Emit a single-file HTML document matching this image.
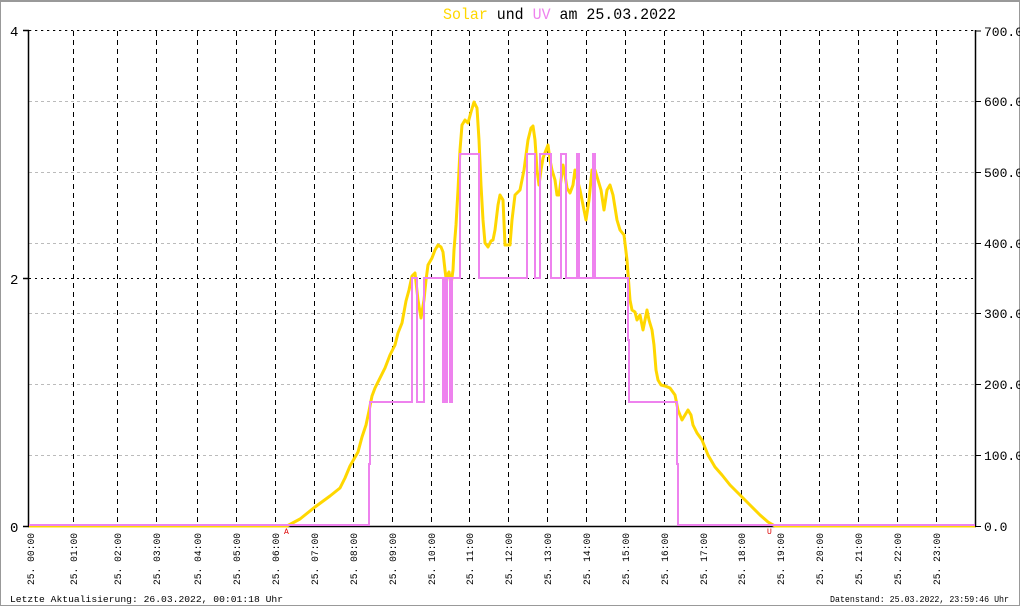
<!DOCTYPE html>
<html><head><meta charset="utf-8"><style>
html,body{margin:0;padding:0;background:#fff}
svg{display:block}
text{font-family:"Liberation Mono","DejaVu Sans Mono",monospace}
</style></head><body>
<svg width="1020" height="606" viewBox="0 0 1020 606" xmlns="http://www.w3.org/2000/svg">
<rect x="0.5" y="0.5" width="1019" height="605" fill="#fff" stroke="#999" stroke-width="1"/>
<line x1="0" y1="1" x2="1020" y2="1" stroke="#999" stroke-width="2"/>
<text x="443" y="19" font-size="16" textLength="233" lengthAdjust="spacingAndGlyphs"><tspan fill="#ffd700">Solar</tspan> und <tspan fill="#ee82ee">UV</tspan> am 25.03.2022</text>
<g stroke="#bbb" stroke-dasharray="3,3" stroke-width="1">
<line x1="29" y1="101.5" x2="975" y2="101.5"/><line x1="29" y1="172.5" x2="975" y2="172.5"/>
<line x1="29" y1="243.5" x2="975" y2="243.5"/><line x1="29" y1="313.5" x2="975" y2="313.5"/>
<line x1="29" y1="384.5" x2="975" y2="384.5"/><line x1="29" y1="455.5" x2="975" y2="455.5"/>
<line x1="29" y1="30.5" x2="975" y2="30.5"/>
</g>
<g stroke="#000" stroke-dasharray="2,4" stroke-width="1">
<line x1="29" y1="30.5" x2="975" y2="30.5"/><line x1="29" y1="278.5" x2="975" y2="278.5"/>
</g>
<g stroke="#000" stroke-dasharray="5,4" stroke-width="1">
<line x1="73.5" y1="31" x2="73.5" y2="526"/><line x1="117.5" y1="31" x2="117.5" y2="526"/>
<line x1="156.5" y1="31" x2="156.5" y2="526"/><line x1="197.5" y1="31" x2="197.5" y2="526"/>
<line x1="236.5" y1="31" x2="236.5" y2="526"/><line x1="275.5" y1="31" x2="275.5" y2="526"/>
<line x1="314.5" y1="31" x2="314.5" y2="526"/><line x1="353.5" y1="31" x2="353.5" y2="526"/>
<line x1="392.5" y1="31" x2="392.5" y2="526"/><line x1="431.5" y1="31" x2="431.5" y2="526"/>
<line x1="469.5" y1="31" x2="469.5" y2="526"/><line x1="508.5" y1="31" x2="508.5" y2="526"/>
<line x1="547.5" y1="31" x2="547.5" y2="526"/><line x1="586.5" y1="31" x2="586.5" y2="526"/>
<line x1="625.5" y1="31" x2="625.5" y2="526"/><line x1="664.5" y1="31" x2="664.5" y2="526"/>
<line x1="703.5" y1="31" x2="703.5" y2="526"/><line x1="741.5" y1="31" x2="741.5" y2="526"/>
<line x1="780.5" y1="31" x2="780.5" y2="526"/><line x1="819.5" y1="31" x2="819.5" y2="526"/>
<line x1="858.5" y1="31" x2="858.5" y2="526"/><line x1="897.5" y1="31" x2="897.5" y2="526"/>
<line x1="936.5" y1="31" x2="936.5" y2="526"/>
</g>
<g stroke="#000" stroke-width="1.5">
<line x1="28.5" y1="30" x2="28.5" y2="527"/>
<line x1="975.5" y1="30" x2="975.5" y2="527"/>
<line x1="28" y1="526.5" x2="976" y2="526.5"/>
<line x1="23" y1="30.5" x2="29" y2="30.5"/><line x1="23" y1="278.5" x2="29" y2="278.5"/><line x1="23" y1="526.5" x2="29" y2="526.5"/>
</g>
<g stroke="#000" stroke-width="1">
<line x1="975" y1="31" x2="981" y2="31"/><line x1="975" y1="101.5" x2="981" y2="101.5"/><line x1="975" y1="172.5" x2="981" y2="172.5"/><line x1="975" y1="243.5" x2="981" y2="243.5"/><line x1="975" y1="313.5" x2="981" y2="313.5"/><line x1="975" y1="384.5" x2="981" y2="384.5"/><line x1="975" y1="455.5" x2="981" y2="455.5"/><line x1="975" y1="526.5" x2="981" y2="526.5"/>
</g>
<g font-size="14" fill="#000">
<text x="10" y="36">4</text><text x="10" y="284">2</text><text x="10" y="532">0</text>
</g>
<g font-size="13" fill="#000">
<text x="984" y="36">700.0</text><text x="984" y="106">600.0</text><text x="984" y="177">500.0</text><text x="984" y="248">400.0</text><text x="984" y="318">300.0</text><text x="984" y="389">200.0</text><text x="984" y="460">100.0</text><text x="984" y="531">0.0</text>
</g>
<polyline fill="none" stroke="#ffd700" stroke-width="3" stroke-linejoin="round" points="29,526 287,526 300,519 315,507 330,496 340,488 345,478 350,466 358,452 362,437 366,425 369,411 372,396 375,388 380,378 385,368 390,355 395,345 398,333 402,323 406,301 409,290 412,276 415,273 418,300 421,318 424,300 426,280 428,265 432,258 435,250 438,245 441,247 443,252 445,270 446,278 449,272 451,285 453,270 454,250 456,225 458,190 460,150 462,125 465,120 468,123 471,112 474,102 477,108 479,140 481,185 483,220 485,243 488,247 491,241 493,240 495,230 498,205 500,195 503,200 505,245 510,245 512,220 515,195 520,190 524,170 526,155 528,140 531,128 533,126 535,140 537,170 539,185 541,170 543,158 546,150 548,145 550,160 552,170 555,180 557,195 559,195 561,180 563,165 565,175 567,188 570,193 573,185 575,170 577,178 580,190 583,205 586,220 589,200 592,170 595,170 598,180 601,190 604,210 607,190 610,185 613,195 617,220 620,230 624,235 627,260 630,300 632,310 635,312 637,320 640,315 643,330 645,320 647,310 649,320 652,330 654,345 656,370 658,380 661,385 665,386 670,388 675,395 678,410 682,420 685,415 688,410 691,415 693,425 697,433 702,440 708,455 715,467 722,475 730,485 740,495 750,505 760,515 768,522 775,526 975,526"/>
<polyline fill="none" stroke="#ee82ee" stroke-width="2" points="29,525 369,525 369,464 370,464 370,402 412,402 412,278 417,278 417,402 424,402 424,278 443,278 443,402 444,402 444,278 446,278 446,402 447,402 447,278 450,278 450,402 452,402 452,278 460,278 460,154 479,154 479,278 527,278 527,154 535,154 535,278 540,278 540,154 551,154 551,278 561,278 561,154 566,154 566,278 577,278 577,154 579,154 579,278 593,278 593,154 595,154 595,278 628,278 628,340 629,340 629,402 677,402 677,464 678,464 678,525 975,525"/>
<text x="284" y="534" font-size="8" fill="#d00">A</text>
<text x="767" y="534" font-size="8" fill="#d00">U</text>
<g font-size="10" fill="#000">
<text transform="translate(34,585) rotate(-90)" textLength="52" lengthAdjust="spacingAndGlyphs">25. 00:00</text>
<text transform="translate(77,585) rotate(-90)" textLength="52" lengthAdjust="spacingAndGlyphs">25. 01:00</text>
<text transform="translate(121,585) rotate(-90)" textLength="52" lengthAdjust="spacingAndGlyphs">25. 02:00</text>
<text transform="translate(160,585) rotate(-90)" textLength="52" lengthAdjust="spacingAndGlyphs">25. 03:00</text>
<text transform="translate(201,585) rotate(-90)" textLength="52" lengthAdjust="spacingAndGlyphs">25. 04:00</text>
<text transform="translate(240,585) rotate(-90)" textLength="52" lengthAdjust="spacingAndGlyphs">25. 05:00</text>
<text transform="translate(279,585) rotate(-90)" textLength="52" lengthAdjust="spacingAndGlyphs">25. 06:00</text>
<text transform="translate(318,585) rotate(-90)" textLength="52" lengthAdjust="spacingAndGlyphs">25. 07:00</text>
<text transform="translate(357,585) rotate(-90)" textLength="52" lengthAdjust="spacingAndGlyphs">25. 08:00</text>
<text transform="translate(396,585) rotate(-90)" textLength="52" lengthAdjust="spacingAndGlyphs">25. 09:00</text>
<text transform="translate(435,585) rotate(-90)" textLength="52" lengthAdjust="spacingAndGlyphs">25. 10:00</text>
<text transform="translate(473,585) rotate(-90)" textLength="52" lengthAdjust="spacingAndGlyphs">25. 11:00</text>
<text transform="translate(512,585) rotate(-90)" textLength="52" lengthAdjust="spacingAndGlyphs">25. 12:00</text>
<text transform="translate(551,585) rotate(-90)" textLength="52" lengthAdjust="spacingAndGlyphs">25. 13:00</text>
<text transform="translate(590,585) rotate(-90)" textLength="52" lengthAdjust="spacingAndGlyphs">25. 14:00</text>
<text transform="translate(629,585) rotate(-90)" textLength="52" lengthAdjust="spacingAndGlyphs">25. 15:00</text>
<text transform="translate(668,585) rotate(-90)" textLength="52" lengthAdjust="spacingAndGlyphs">25. 16:00</text>
<text transform="translate(707,585) rotate(-90)" textLength="52" lengthAdjust="spacingAndGlyphs">25. 17:00</text>
<text transform="translate(745,585) rotate(-90)" textLength="52" lengthAdjust="spacingAndGlyphs">25. 18:00</text>
<text transform="translate(784,585) rotate(-90)" textLength="52" lengthAdjust="spacingAndGlyphs">25. 19:00</text>
<text transform="translate(823,585) rotate(-90)" textLength="52" lengthAdjust="spacingAndGlyphs">25. 20:00</text>
<text transform="translate(862,585) rotate(-90)" textLength="52" lengthAdjust="spacingAndGlyphs">25. 21:00</text>
<text transform="translate(901,585) rotate(-90)" textLength="52" lengthAdjust="spacingAndGlyphs">25. 22:00</text>
<text transform="translate(940,585) rotate(-90)" textLength="52" lengthAdjust="spacingAndGlyphs">25. 23:00</text>
</g>
<text x="10" y="602" font-size="9" textLength="273" lengthAdjust="spacingAndGlyphs">Letzte Aktualisierung: 26.03.2022, 00:01:18 Uhr</text>
<text x="830" y="602" font-size="9" textLength="179" lengthAdjust="spacingAndGlyphs">Datenstand: 25.03.2022, 23:59:46 Uhr</text>
</svg>
</body></html>
